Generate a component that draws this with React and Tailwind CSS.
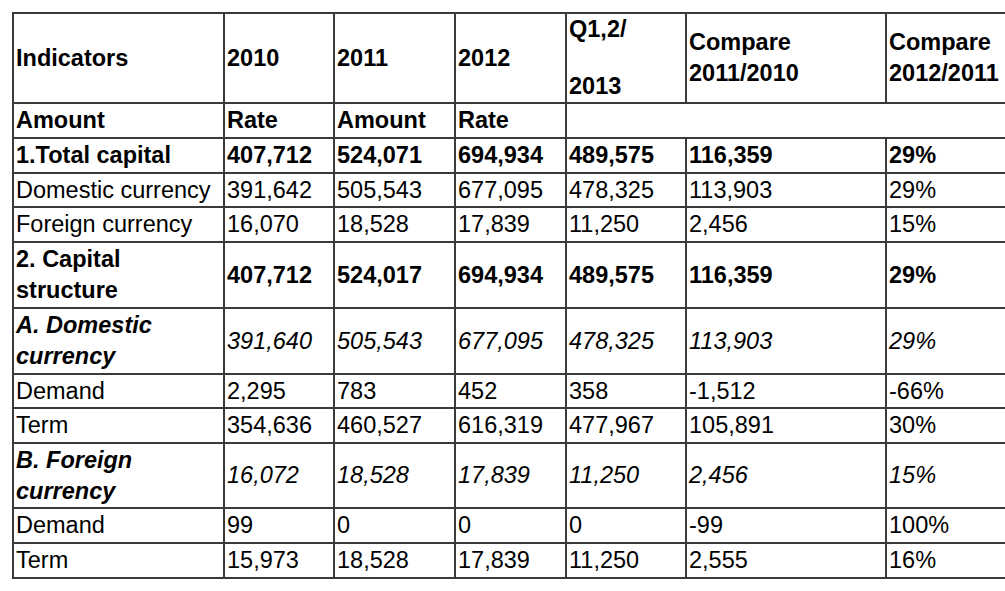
import React from 'react'

const rows = [
    { label: '1.Total capital', style: 'bold', h: 'h-[35px]', values: ['407,712', '524,071', '694,934', '489,575', '116,359', '29%'] },
    { label: 'Domestic currency', h: 'h-[34px]', values: ['391,642', '505,543', '677,095', '478,325', '113,903', '29%'] },
    { label: 'Foreign currency', h: 'h-[35px]', values: ['16,070', '18,528', '17,839', '11,250', '2,456', '15%'] },
    { label: ['2. Capital', 'structure'], style: 'bold', h: 'h-[66px]', values: ['407,712', '524,017', '694,934', '489,575', '116,359', '29%'] },
    { label: ['A. Domestic', 'currency'], style: 'italic', h: 'h-[66px]', values: ['391,640', '505,543', '677,095', '478,325', '113,903', '29%'] },
    { label: 'Demand', h: 'h-[34px]', values: ['2,295', '783', '452', '358', '-1,512', '-66%'] },
    { label: 'Term', h: 'h-[35px]', values: ['354,636', '460,527', '616,319', '477,967', '105,891', '30%'] },
    { label: ['B. Foreign', 'currency'], style: 'italic', h: 'h-[65px]', values: ['16,072', '18,528', '17,839', '11,250', '2,456', '15%'] },
    { label: 'Demand', h: 'h-[35px]', values: ['99', '0', '0', '0', '-99', '100%'] },
    { label: 'Term', h: 'h-[35px]', values: ['15,973', '18,528', '17,839', '11,250', '2,555', '16%'] },
];

const cell = "border-2 border-[#3a3a3a] px-[2px] align-middle text-left";

export default function App() {
    return (
        <div className="w-[1005px] h-[591px] overflow-hidden bg-white pt-[12px] pl-[12px] text-black font-['Liberation_Sans',Arial,sans-serif] text-[23.5px] leading-[31px]">
            <table className="table-fixed border-collapse w-[1035px]">
                <colgroup>
                    <col className="w-[211px]" />
                    <col className="w-[110px]" />
                    <col className="w-[121px]" />
                    <col className="w-[111px]" />
                    <col className="w-[120px]" />
                    <col className="w-[200px]" />
                    <col className="w-[162px]" />
                </colgroup>
                <tbody>
                    <tr className="h-[90px] font-bold">
                        <td className={cell}>Indicators</td>
                        <td className={cell}>2010</td>
                        <td className={cell}>2011</td>
                        <td className={cell}>2012</td>
                        <td className={cell}>
                            <div>Q1,2/</div>
                            <div className="mt-[26px]">2013</div>
                        </td>
                        <td className={cell}>Compare<br />2011/2010</td>
                        <td className={cell}>Compare<br />2012/2011</td>
                    </tr>
                    <tr className="h-[35px] font-bold">
                        <td className={cell}>Amount</td>
                        <td className={cell}>Rate</td>
                        <td className={cell}>Amount</td>
                        <td className={cell}>Rate</td>
                        <td className={cell} colSpan={3}></td>
                    </tr>
                    {rows.map((r, i) => (
                        <tr key={i} className={r.h}>
                            <td className={`${cell} ${r.style === 'bold' ? 'font-bold' : ''} ${r.style === 'italic' ? 'font-bold italic' : ''}`}>
                                {Array.isArray(r.label) ? <>{r.label[0]}<br />{r.label[1]}</> : r.label}
                            </td>
                            {r.values.map((v, j) => (
                                <td key={j} className={`${cell} ${r.style === 'bold' ? 'font-bold' : ''} ${r.style === 'italic' ? 'italic' : ''}`}>{v}</td>
                            ))}
                        </tr>
                    ))}
                </tbody>
            </table>
        </div>
    )
}
